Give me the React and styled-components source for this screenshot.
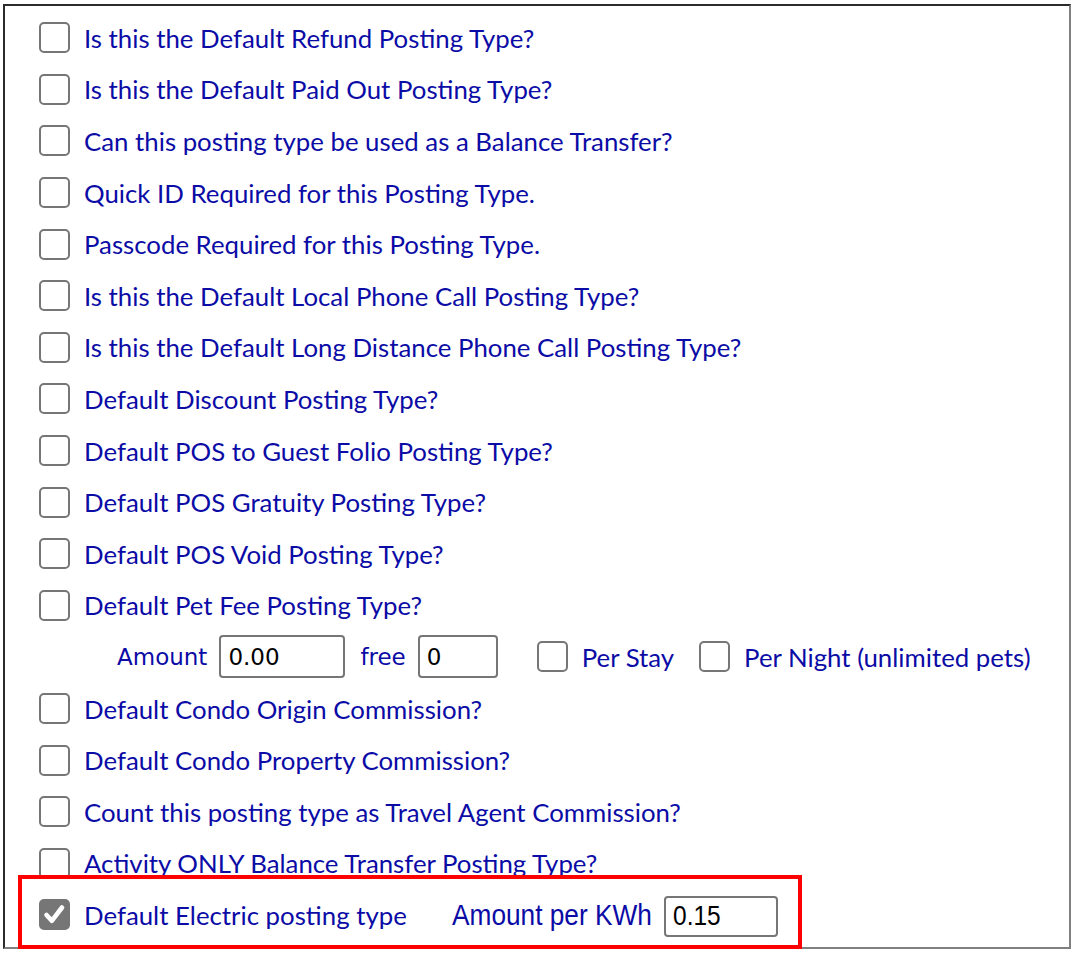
import React from "react";
import styled, { createGlobalStyle } from "styled-components";

const GlobalStyle = createGlobalStyle`
  body {
    margin: 0;
    background: #ffffff;
    font-family: Lato, "Noto Sans", sans-serif;
  }
`;

const textBlue = "#0b0ba6";

const Panel = styled.div`
  margin: 4px 0 0 3px;
  width: 1068px;
  height: 945px;
  box-sizing: border-box;
  border-style: solid;
  border-width: 2px;
  border-color: #2b2b2b #808080 #808080 #2b2b2b;
  padding: 6px 0 0 34px;
  display: flex;
  flex-direction: column;
`;

const Row = styled.div`
  position: relative;
  height: 51.6px;
  display: flex;
  align-items: center;
  flex-shrink: 0;
`;

const Box = styled.span`
  width: 31px;
  height: 31px;
  box-sizing: border-box;
  border: 2px solid #767676;
  border-radius: 5px;
  background: ${({ checked }) => (checked ? "#767676" : "#ffffff")};
  display: inline-flex;
  align-items: center;
  justify-content: center;
  flex-shrink: 0;
`;

const Label = styled.span`
  margin-left: 14px;
  color: ${textBlue};
  font-size: 25.8px;
  white-space: nowrap;
`;

const Check = ({ checked }) => (
  <Box checked={checked}>
    {checked && (
      <svg width="27" height="27" viewBox="0 0 27 27">
        <path d="M5.5 14 L10.8 19.8 L21 6.5" fill="none" stroke="#fff" strokeWidth="4.6" strokeLinecap="round" strokeLinejoin="round" />
      </svg>
    )}
  </Box>
);

const Option = ({ children, checked }) => (
  <Row>
    <Check checked={checked} />
    <Label>{children}</Label>
  </Row>
);

const PetRow = styled(Row)`
  padding-left: 78px;
`;

const PlainLabel = styled.span`
  color: ${textBlue};
  font-family: "DejaVu Sans", Verdana, sans-serif;
  font-size: 23px;
  margin-right: ${({ gap }) => gap}px;
  margin-left: ${({ lead }) => lead || 0}px;
`;

const TextBox = styled.div`
  width: ${({ w }) => w}px;
  height: ${({ h }) => h}px;
  box-sizing: border-box;
  border: 2px solid #767676;
  border-radius: 4px;
  padding-left: 7px;
  display: flex;
  align-items: center;
  font-family: "DejaVu Sans", Verdana, sans-serif;
  font-size: 23px;
  color: #000;
`;

/* the electric row uses a narrow Arial-like face; squeeze Liberation Sans */
const Narrow = styled.span`
  display: inline-block;
  font-family: "Liberation Sans", Arial, sans-serif;
  font-size: ${({ size }) => size}px;
  transform: scaleX(0.875);
  transform-origin: left center;
`;

const InlineOption = styled.span`
  display: inline-flex;
  align-items: center;
  margin-left: ${({ lead }) => lead}px;
`;

const Highlight = styled.div`
  position: absolute;
  left: -21px;
  top: -14px;
  width: 784px;
  height: 74px;
  box-sizing: border-box;
  border: 4px solid #ff0000;
  pointer-events: none;
`;

const KwhLabel = styled(Narrow)`
  color: ${textBlue};
  margin-left: 45px;
  margin-right: -16.5px;
`;

const options = [
  "Is this the Default Refund Posting Type?",
  "Is this the Default Paid Out Posting Type?",
  "Can this posting type be used as a Balance Transfer?",
  "Quick ID Required for this Posting Type.",
  "Passcode Required for this Posting Type.",
  "Is this the Default Local Phone Call Posting Type?",
  "Is this the Default Long Distance Phone Call Posting Type?",
  "Default Discount Posting Type?",
  "Default POS to Guest Folio Posting Type?",
  "Default POS Gratuity Posting Type?",
  "Default POS Void Posting Type?",
  "Default Pet Fee Posting Type?",
];

const moreOptions = [
  "Default Condo Origin Commission?",
  "Default Condo Property Commission?",
  "Count this posting type as Travel Agent Commission?",
  "Activity ONLY Balance Transfer Posting Type?",
];

export default function App() {
  return (
    <>
      <GlobalStyle />
      <Panel>
        {options.map((o) => (
          <Option key={o}>{o}</Option>
        ))}
        <PetRow>
          <PlainLabel gap={12}>Amount</PlainLabel>
          <TextBox w={126} h={43}>0.00</TextBox>
          <PlainLabel lead={15} gap={12}>free</PlainLabel>
          <TextBox w={80} h={43}>0</TextBox>
          <InlineOption lead={39}>
            <Check />
            <Label>Per Stay</Label>
          </InlineOption>
          <InlineOption lead={25}>
            <Check />
            <Label>Per Night (unlimited pets)</Label>
          </InlineOption>
        </PetRow>
        {moreOptions.map((o) => (
          <Option key={o}>{o}</Option>
        ))}
        <Row>
          <Highlight />
          <Check checked />
          <Label>Default Electric posting type</Label>
          <KwhLabel size={30}>Amount per KWh</KwhLabel>
          <TextBox w={114} h={41} style={{ marginTop: 3 }}>
            <Narrow size={28}>0.15</Narrow>
          </TextBox>
        </Row>
      </Panel>
    </>
  );
}
